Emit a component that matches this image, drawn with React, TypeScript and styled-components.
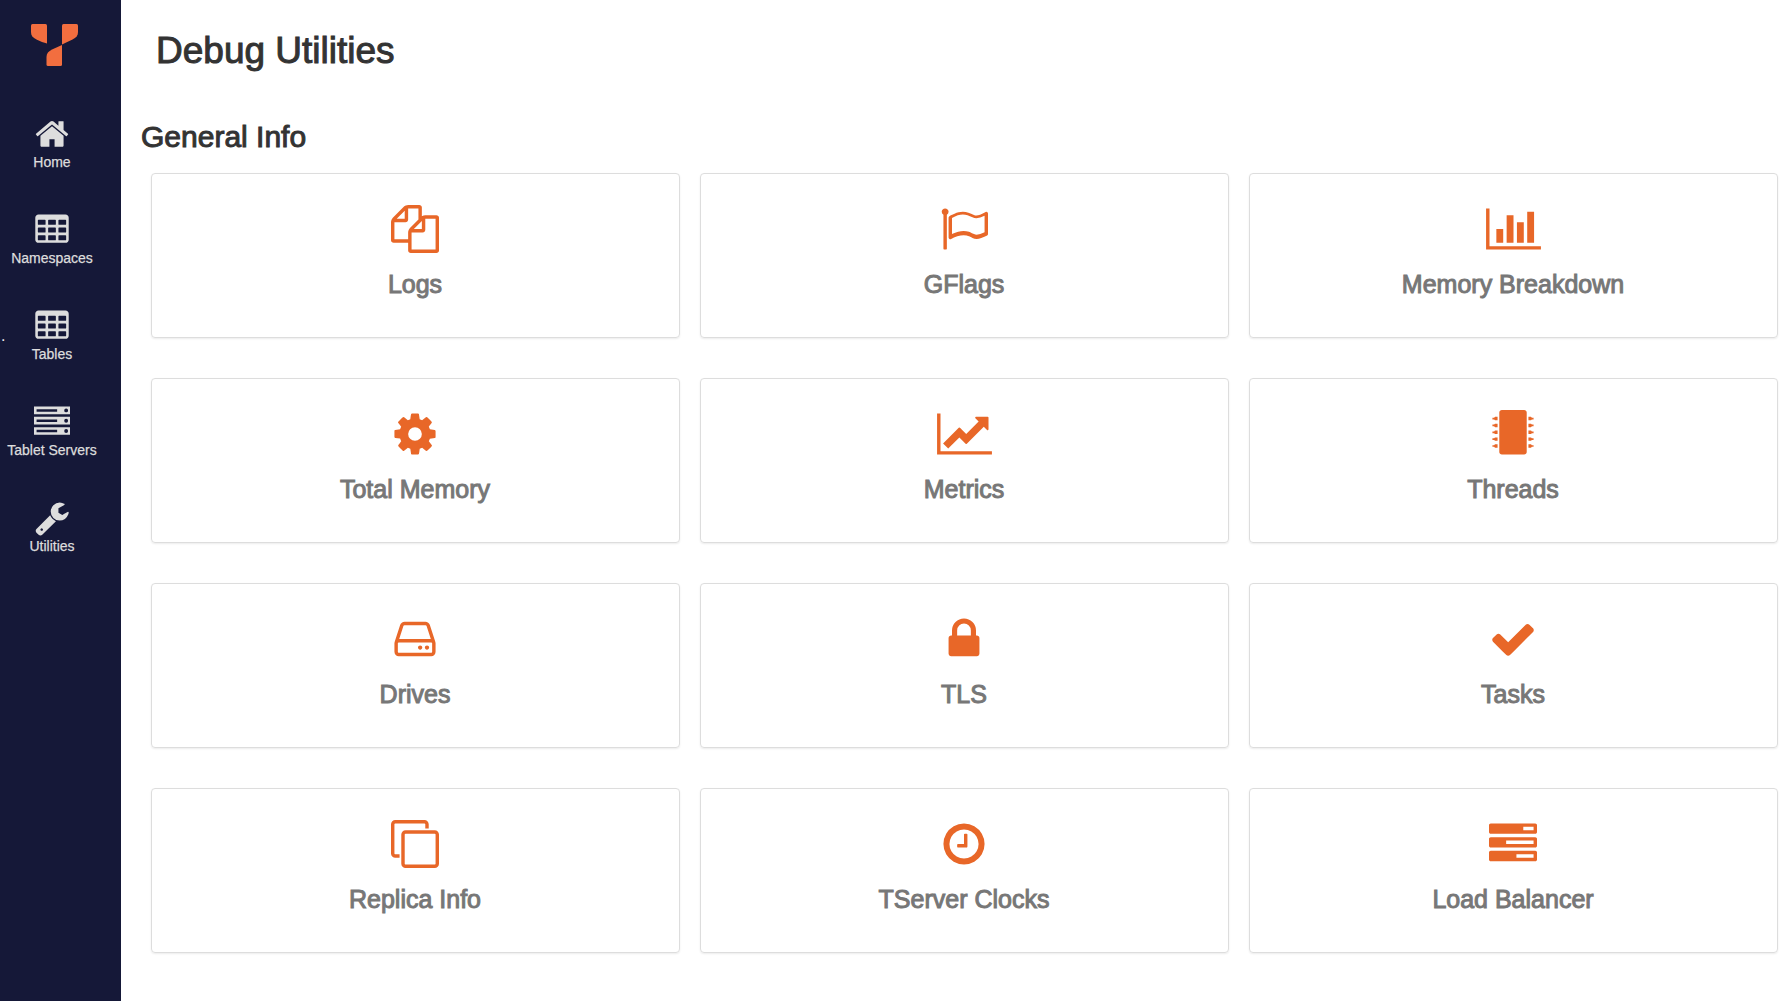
import React from "react";
import styled, { createGlobalStyle } from "styled-components";

const GlobalStyle = createGlobalStyle`
  *, *::before, *::after { box-sizing: border-box; }
  body {
    margin: 0;
    background: #fff;
    color: #333;
    font-family: "Liberation Sans", Arial, Helvetica, sans-serif;
  }
`;

const Page = styled.div`
  display: flex;
  min-height: 100vh;
`;

const Sidebar = styled.nav`
  flex: 0 0 121px;
  background: #151838;
`;

const LogoLink = styled.a`
  display: block;
  padding: 24px 0 0 31px;
  height: 112px;
`;

const NavList = styled.ul`
  list-style: none;
  margin: 0;
  padding: 0;
  width: 104px;
  display: flex;
  flex-direction: column;
  gap: 36px;
`;

const NavItem = styled.li`
  position: relative;
`;

const NavLink = styled.a`
  display: flex;
  flex-direction: column;
  align-items: center;
  padding-top: 4px;
  color: #ddd;
  font-size: 14px;
  line-height: 20px;
  white-space: nowrap;
  text-decoration: none;
  -webkit-text-stroke: 0.25px currentColor;
`;

const Marker = styled.span`
  position: absolute;
  left: 1px;
  bottom: 18px;
  color: #eee;
  font-size: 16px;
  line-height: 20px;
`;

const Main = styled.main`
  flex: 1;
  min-width: 0;
  padding: 31px 7px 48px 20px;
`;

const PageTitle = styled.h1`
  margin: 0 0 49px 15px;
  font-size: 37px;
  line-height: 40px;
  font-weight: 400;
  -webkit-text-stroke: 1px currentColor;
`;

const SectionTitle = styled.h2`
  margin: 0 0 19px;
  font-size: 30px;
  line-height: 34px;
  font-weight: 400;
  -webkit-text-stroke: 1px currentColor;
`;

const CardGrid = styled.div`
  display: grid;
  grid-template-columns: repeat(3, 1fr);
  gap: 40px 20px;
  padding-left: 10px;
`;

const Card = styled.a`
  display: flex;
  flex-direction: column;
  align-items: center;
  gap: 17px;
  padding: 31px 16px 39px 15px;
  border: 1px solid #ddd;
  border-radius: 4px;
  box-shadow: 0 1px 2px rgba(0, 0, 0, 0.08);
  color: #e86728;
  text-decoration: none;
`;

const CardTitle = styled.h3`
  margin: 0;
  color: #777;
  font-size: 25px;
  line-height: 28px;
  font-weight: 400;
  text-align: center;
  -webkit-text-stroke: 1px currentColor;
`;

const Glyph = styled.svg`
  display: block;
  fill: currentColor;
  fill-rule: evenodd;
`;

const cell = (x: number, y: number) =>
  `M${x + 32} ${y}h320q32 0 32 32v192q0 32-32 32h-320q-32 0-32-32v-192q0-32 32-32z`;
const tableCells = [384, 768, 1152]
  .flatMap((y) => [192, 704, 1216].map((x) => cell(x, y)))
  .join("");

const pins = [320, 576, 832, 1088, 1344]
  .map(
    (y) =>
      `M320 ${y - 64}v128h-96l-32-32h-64v-64h64l32-32zM1472 ${y - 64}v128h96l32-32h64v-64h-64l-32-32z`
  )
  .join("");

const serverUnit = (y: number) =>
  `M0 ${y}h1792v384h-1792zM128 ${y + 128}v128h1024v-128zM1696 ${y + 192}a96 96 0 1 0-192 0a96 96 0 1 0 192 0z`;

const icons = {
  home: "M1408 992v480q0 26-19 45t-45 19h-384v-384h-256v384h-384q-26 0-45-19t-19-45v-480q0-1 .5-3t.5-3l575-474 575 474q1 2 1 6zm223-69l-62 74q-8 9-21 11h-3q-13 0-21-7l-692-577-692 577q-12 8-24 7-13-2-21-11l-62-74q-8-10-7-23.5t11-21.5l719-599q32-26 76-26t76 26l244 204v-195q0-14 9-23t23-9h192q14 0 23 9t9 23v408l219 182q10 8 11 21.5t-7 23.5z",
  table:
    "M224 128h1344q66 0 113 47t47 113v1088q0 66-47 113t-113 47h-1344q-66 0-113-47t-47-113v-1088q0-66 47-113t113-47z" +
    tableCells,
  server: [128, 640, 1152].map(serverUnit).join(""),
  wrench:
    "M448 1472q0-26-19-45t-45-19-45 19-19 45 19 45 45 19 45-19 19-45zm644-420l-682 682q-37 37-90 37-52 0-91-37l-106-108q-38-36-38-90 0-53 38-91l681-681q39 98 114.5 173.5t173.5 114.5zm634-435q0 39-23 106-47 134-164.5 217.5t-258.5 83.5q-185 0-316.5-131.5t-131.5-316.5 131.5-316.5 316.5-131.5q58 0 121.5 16.5t107.5 46.5q16 11 16 28t-16 28l-293 169v224l193 107q5-3 79-48.5t135.5-81 70.5-35.5q15 0 23.5 10t8.5 25z",
  files:
    "M1696 384q40 0 68 28t28 68v1216q0 40-28 68t-68 28h-960q-40 0-68-28t-28-68v-288h-544q-40 0-68-28t-28-68v-672q0-40 20-88t48-76l408-408q28-28 76-48t88-20h416q40 0 68 28t28 68v328q68-40 128-40h416zm-544 213l-299 299h299v-299zm-640-384l-299 299h299v-299zm196 647l316-316v-416h-384v416q0 40-28 68t-68 28h-416v640h512v-256q0-40 20-88t48-76zm956 804v-1152h-384v416q0 40-28 68t-68 28h-416v640h896z",
  flag: "M1664 1017v-616q-169 91-306 91-82 0-145-32-100-49-184-76.5t-178-27.5q-173 0-403 127v599q245-113 433-113 55 0 103.5 7.5t98 26 77 31 82.5 39.5l28 14q44 22 101 22 120 0 293-93zM320 256q0 72-64 110v1266q0 13-9.5 22.5t-22.5 9.5h-64q-13 0-22.5-9.5t-9.5-22.5v-1266q-64-38-64-110 0-53 37.5-90.5t90.5-37.5 90.5 37.5 37.5 90.5zm1472 64v763q0 39-35 57-10 5-17 9-218 116-369 116-88 0-158-35l-28-14q-64-33-99-48t-91-29-114-14q-102 0-235.5 44t-228.5 102q-15 9-33 9-16 0-32-8-32-19-32-56v-742q0-35 31-55 35-21 78.5-42.5t114-52 152.5-49.5 155-19q112 0 209 31t209 86q38 19 89 19 122 0 310-112 22-12 31-17 31-16 62 2 31 20 31 55z",
  bars: "M640 896v512h-256v-512h256zm384-512v1024h-256v-1024h256zm1024 1152v128h-2048v-1536h128v1408h1920zm-640-896v768h-256v-768h256zm384-384v1152h-256v-1152h256z",
  cog: "M1152 896q0-106-75-181t-181-75-181 75-75 181 75 181 181 75 181-75 75-181zm512-109v222q0 12-8 23t-20 13l-185 28q-19 54-39 91 35 50 107 138 10 12 10 25t-9 23q-27 37-99 108t-94 71q-12 0-26-9l-138-108q-44 23-91 38-16 136-29 186-7 28-36 28h-222q-14 0-24.5-8.5t-11.5-21.5l-28-184q-49-16-90-37l-141 107q-10 9-25 9-14 0-25-11-126-114-165-168-7-10-7-23 0-12 8-23 15-21 51-66.5t54-70.5q-27-50-41-99l-183-27q-13-2-21-12.5t-8-23.5v-222q0-12 8-23t19-13l186-28q14-46 39-92-40-57-107-138-10-12-10-24 0-10 9-23 26-36 98.5-107.5t94.5-71.5q13 0 26 10l138 107q44-23 91-38 16-136 29-186 7-28 36-28h222q14 0 24.5 8.5t11.5 21.5l28 184q49 16 90 37l142-107q9-9 24-9 13 0 25 10 129 119 165 170 7 8 7 22 0 12-8 23-15 21-51 66.5t-54 70.5q26 50 41 98l183 28q13 2 21 12.5t8 23.5z",
  line: "M2048 1536v128h-2048v-1536h128v1408h1920zm-128-1248v435q0 21-19.5 29.5t-35.5-7.5l-121-121-633 633q-10 10-23 10t-23-10l-233-233-416 416-192-192 585-585q10-10 23-10t23 10l233 233 464-464-121-121q-16-16-7.5-35.5t29.5-19.5h435q14 0 23 9t9 23z",
  chip:
    "M480 0h832q40 0 68 28t28 68v1472q0 40-28 68t-68 28h-832q-40 0-68-28t-28-68v-1472q0-40 28-68t68-28z" +
    pins,
  drive:
    "M1168 1216q0 33-23.5 56.5t-56.5 23.5-56.5-23.5-23.5-56.5 23.5-56.5 56.5-23.5 56.5 23.5 23.5 56.5zm256 0q0 33-23.5 56.5t-56.5 23.5-56.5-23.5-23.5-56.5 23.5-56.5 56.5-23.5 56.5 23.5 23.5 56.5zm112 160v-320q0-13-9.5-22.5t-22.5-9.5h-1216q-13 0-22.5 9.5t-9.5 22.5v320q0 13 9.5 22.5t22.5 9.5h1216q13 0 22.5-9.5t9.5-22.5zm-1230-480h1180l-157-482q-4-13-16-21.5t-26-8.5h-782q-14 0-26 8.5t-16 21.5zm1358 160v320q0 66-47 113t-113 47h-1216q-66 0-113-47t-47-113v-320q0-25 16-75l197-606q17-53 63-86t101-33h782q55 0 101 33t63 86l197 606q16 50 16 75z",
  lock: "M640 768h512v-192q0-106-75-181t-181-75-181 75-75 181v192zm832 96v576q0 40-28 68t-68 28h-960q-40 0-68-28t-28-68v-576q0-40 28-68t68-28h32v-192q0-184 132-316t316-132 316 132 132 316v192h32q40 0 68 28t28 68z",
  check:
    "M1671 566q0 40-28 68l-724 724-136 136q-28 28-68 28t-68-28l-136-136-362-362q-28-28-28-68t28-68l136-136q28-28 68-28t68 28l294 295 656-657q28-28 68-28t68 28l136 136q28 28 28 68z",
  clone:
    "M1664 1632v-1088q0-13-9.5-22.5t-22.5-9.5h-1088q-13 0-22.5 9.5t-9.5 22.5v1088q0 13 9.5 22.5t22.5 9.5h1088q13 0 22.5-9.5t9.5-22.5zm128-1088v1088q0 66-47 113t-113 47h-1088q-66 0-113-47t-47-113v-1088q0-66 47-113t113-47h1088q66 0 113 47t47 113zm-384-384v160h-128v-160q0-13-9.5-22.5t-22.5-9.5h-1088q-13 0-22.5 9.5t-9.5 22.5v1088q0 13 9.5 22.5t22.5 9.5h160v128h-160q-66 0-113-47t-47-113v-1088q0-66 47-113t113-47h1088q66 0 113 47t47 113z",
  clock:
    "M1024 544v448q0 14-9 23t-23 9h-320q-14 0-23-9t-9-23v-64q0-14 9-23t23-9h224v-352q0-14 9-23t23-9h64q14 0 23 9t9 23zm416 352q0-148-73-273t-198-198-273-73-273 73-198 198-73 273 73 273 198 198 273 73 273-73 198-198 73-273zm224 0q0 209-103 385.5t-279.5 279.5-385.5 103-385.5-103-279.5-279.5-103-385.5 103-385.5 279.5-279.5 385.5-103 385.5 103 279.5 279.5 103 385.5z",
  tasks:
    "M1024 1408h640v-128h-640v128zm-384-512h1024v-128h-1024v128zm640-512h384v-128h-384v128zm512 832v256q0 26-19 45t-45 19h-1664q-26 0-45-19t-19-45v-256q0-26 19-45t45-19h1664q26 0 45 19t19 45zm0-512v256q0 26-19 45t-45 19h-1664q-26 0-45-19t-19-45v-256q0-26 19-45t45-19h1664q26 0 45 19t19 45zm0-512v256q0 26-19 45t-45 19h-1664q-26 0-45-19t-19-45v-256q0-26 19-45t45-19h1664q26 0 45 19t19 45z",
};

type IconName = keyof typeof icons;

function Icon({ name, size }: { name: IconName; size: number }) {
  const units = name === "bars" || name === "line" ? 2048 : 1792;
  // The house is drawn on a narrower grid, so its box starts further left.
  const left = name === "home" ? -64 : 0;
  return (
    <Glyph
      width={Math.round((size * units) / 1792)}
      height={size}
      viewBox={`${left} 0 ${units} 1792`}
      aria-hidden="true"
    >
      <path d={icons[name]} />
    </Glyph>
  );
}

function Logo() {
  return (
    <svg width="47" height="42" viewBox="0 0 47 42" fill="#f26e3f" aria-hidden="true">
      <path d="M1.5 0H14.5Q16 0 16 1.5V19.5C13 19 9 17.3 5.5 15.6C1.8 13.7 0 11.6 0 8V1.5Q0 0 1.5 0Z" />
      <path d="M32.5 0H45.5Q47 0 47 1.5V8C47 11.6 45.2 13.7 41.5 15.6L31 20.5V1.5Q31 0 32.5 0Z" />
      <path d="M31 21V40.5Q31 42 29.5 42H17Q15.5 42 15.5 40.5V33C15.5 29.5 17.5 27.3 21 25.5Z" />
    </svg>
  );
}

const navItems: { label: string; icon: IconName; marked?: boolean }[] = [
  { label: "Home", icon: "home" },
  { label: "Namespaces", icon: "table" },
  { label: "Tables", icon: "table", marked: true },
  { label: "Tablet Servers", icon: "server" },
  { label: "Utilities", icon: "wrench" },
];

const cards: { label: string; icon: IconName }[] = [
  { label: "Logs", icon: "files" },
  { label: "GFlags", icon: "flag" },
  { label: "Memory Breakdown", icon: "bars" },
  { label: "Total Memory", icon: "cog" },
  { label: "Metrics", icon: "line" },
  { label: "Threads", icon: "chip" },
  { label: "Drives", icon: "drive" },
  { label: "TLS", icon: "lock" },
  { label: "Tasks", icon: "check" },
  { label: "Replica Info", icon: "clone" },
  { label: "TServer Clocks", icon: "clock" },
  { label: "Load Balancer", icon: "tasks" },
];

export default function App() {
  return (
    <Page>
      <GlobalStyle />
      <Sidebar>
        <LogoLink href="#" aria-label="YugabyteDB">
          <Logo />
        </LogoLink>
        <NavList>
          {navItems.map((item) => (
            <NavItem key={item.label}>
              {item.marked && <Marker>.</Marker>}
              <NavLink href="#">
                <Icon name={item.icon} size={36} />
                {item.label}
              </NavLink>
            </NavItem>
          ))}
        </NavList>
      </Sidebar>
      <Main>
        <PageTitle>Debug Utilities</PageTitle>
        <SectionTitle>General Info</SectionTitle>
        <CardGrid>
          {cards.map((card) => (
            <Card key={card.label} href="#">
              <Icon name={card.icon} size={48} />
              <CardTitle>{card.label}</CardTitle>
            </Card>
          ))}
        </CardGrid>
      </Main>
    </Page>
  );
}
